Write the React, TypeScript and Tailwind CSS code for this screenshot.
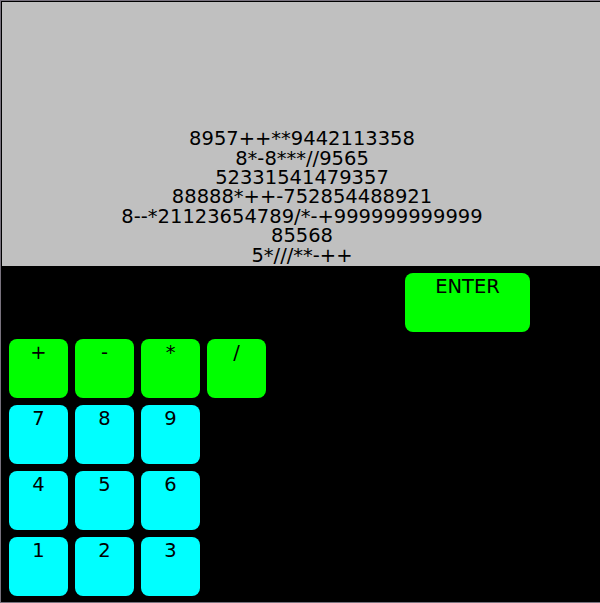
import React from "react";

const lines = [
  "8957++**9442113358",
  "8*-8***//9565",
  "52331541479357",
  "88888*++-752854488921",
  "8--*21123654789/*-+999999999999",
  "85568",
  "5*///**-++",
];

function Key({ label, color, wide }: { label: string; color: "green" | "cyan"; wide?: boolean }) {
  return (
    <div
      className={
        "h-[59px] rounded-[8px] flex justify-center pt-[3px] text-black " +
        (color === "green" ? "bg-[#00ff00] " : "bg-[#00ffff] ") +
        (wide ? "col-span-2" : "")
      }
    >
      <span className="leading-[22px]">{label}</span>
    </div>
  );
}

export default function App() {
  return (
    <div className="w-[600px] h-[603px] overflow-hidden bg-black">
      <div
        className="w-[604px] h-[603px] border border-[#78727e] bg-black"
        style={{ fontFamily: '"DejaVu Sans", Verdana, sans-serif', fontSize: "19.5px" }}
      >
        <div className="w-full h-full border border-black flex flex-col">
          <div className="h-[264px] bg-[#c0c0c0] flex flex-col justify-end items-center pb-[1px] text-black">
            {lines.map((l, i) => (
              <div key={i} className="leading-[19.4px] whitespace-pre">
                {l}
              </div>
            ))}
          </div>
          <div className="grid grid-cols-[repeat(8,59px)] gap-[7px] pl-[7px] pt-[7px]">
            <div className="col-span-6 h-[59px]" />
            <Key label="ENTER" color="green" wide />
            <Key label="+" color="green" />
            <Key label="-" color="green" />
            <Key label="*" color="green" />
            <Key label="/" color="green" />
            <div className="col-span-4" />
            <Key label="7" color="cyan" />
            <Key label="8" color="cyan" />
            <Key label="9" color="cyan" />
            <div className="col-span-5" />
            <Key label="4" color="cyan" />
            <Key label="5" color="cyan" />
            <Key label="6" color="cyan" />
            <div className="col-span-5" />
            <Key label="1" color="cyan" />
            <Key label="2" color="cyan" />
            <Key label="3" color="cyan" />
          </div>
        </div>
      </div>
    </div>
  );
}
